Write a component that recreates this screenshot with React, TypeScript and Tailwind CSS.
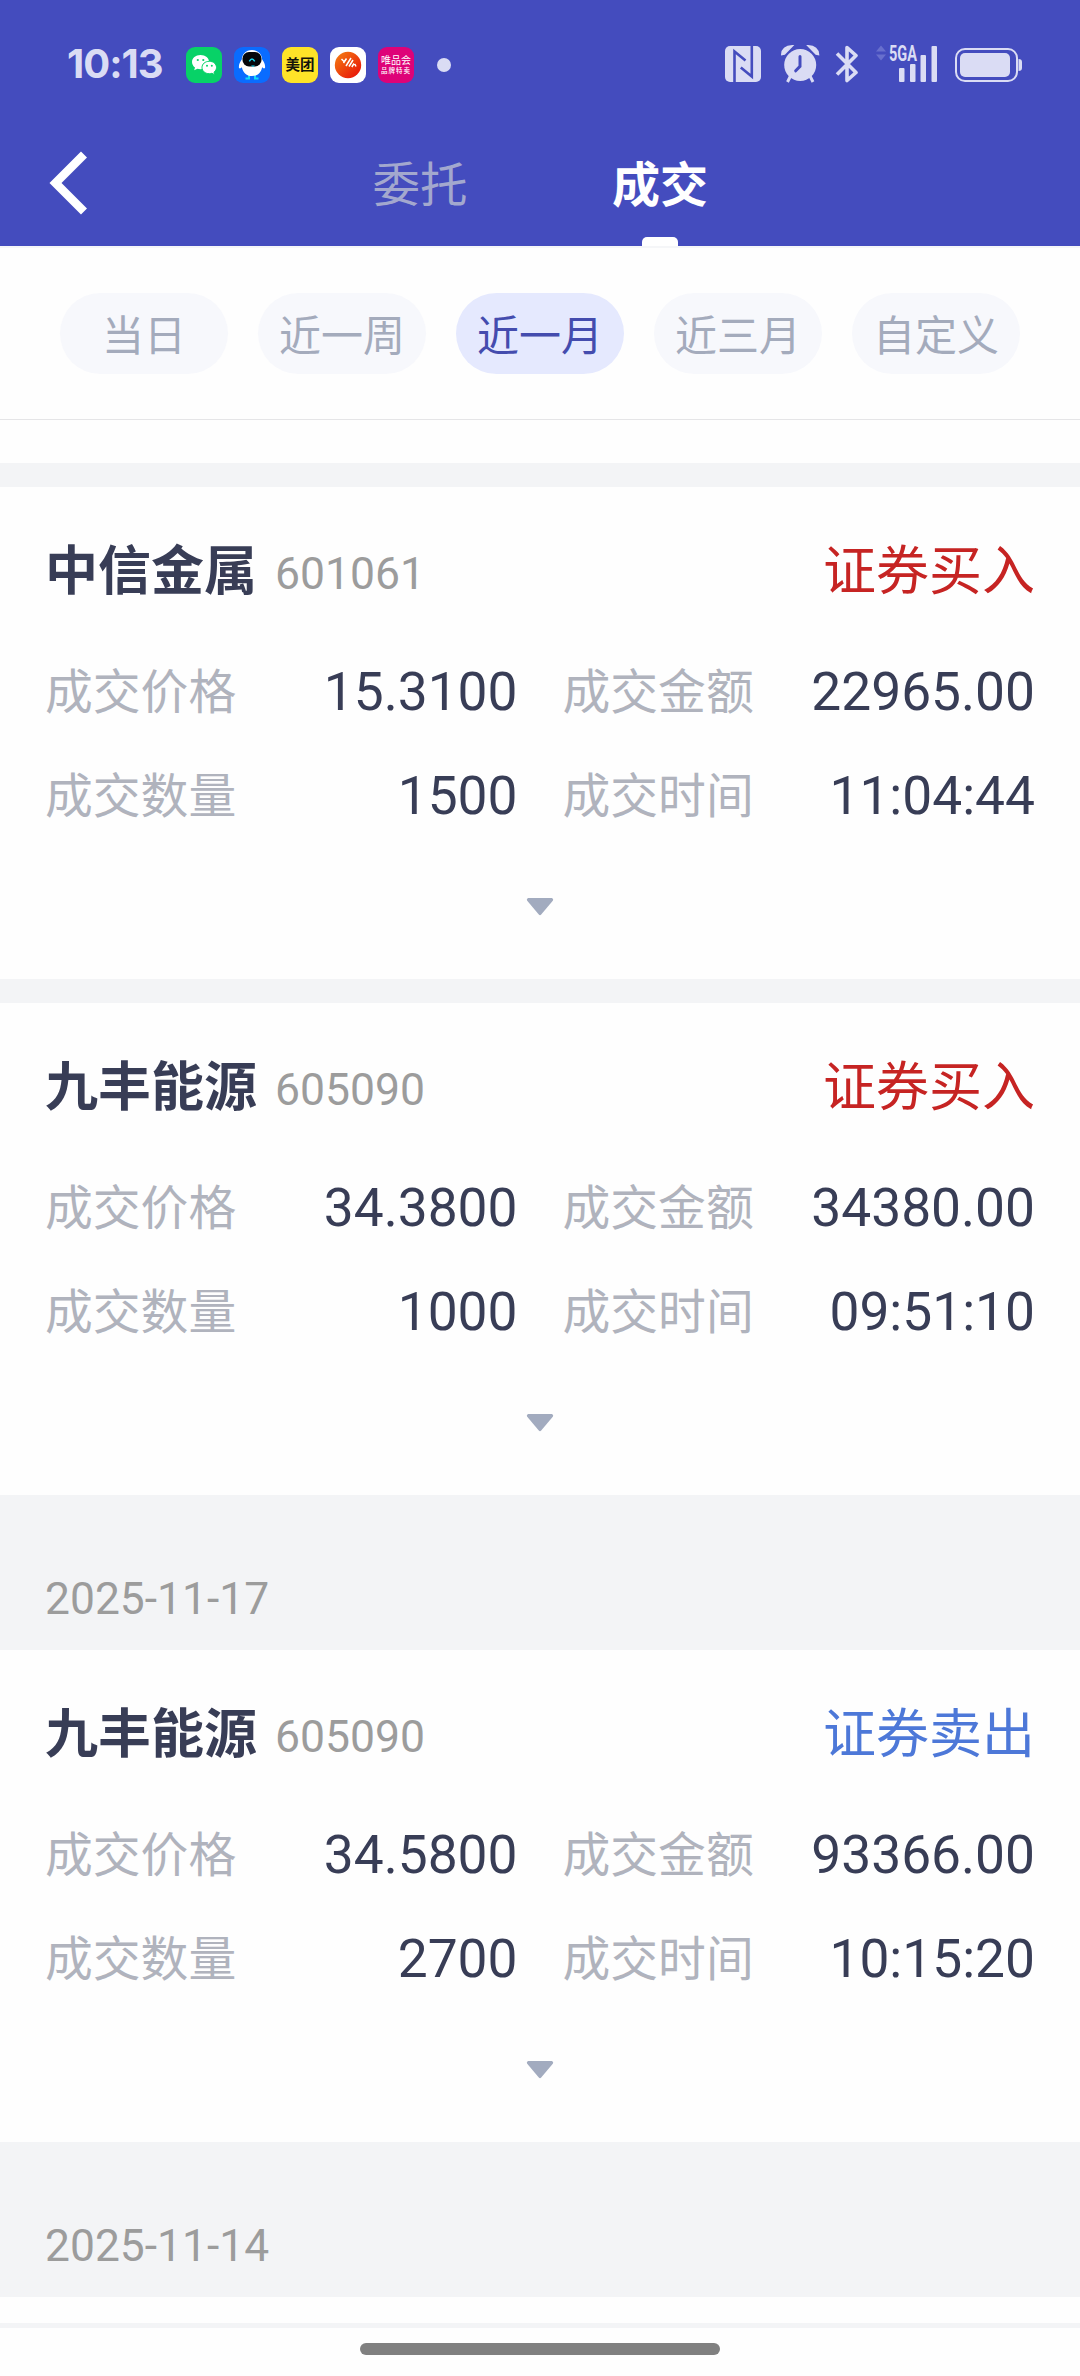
import type { ReactNode } from 'react';

type Trade = {
    name: string;
    code: string;
    side: 'buy' | 'sell';
    price: string;
    amount: string;
    quantity: string;
    time: string;
};

const ranges = ['当日', '近一周', '近一月', '近三月', '自定义'];

const recentTrades: Trade[] = [
    { name: '中信金属', code: '601061', side: 'buy', price: '15.3100', amount: '22965.00', quantity: '1500', time: '11:04:44' },
    { name: '九丰能源', code: '605090', side: 'buy', price: '34.3800', amount: '34380.00', quantity: '1000', time: '09:51:10' },
];

const olderTrades: Trade[] = [
    { name: '九丰能源', code: '605090', side: 'sell', price: '34.5800', amount: '93366.00', quantity: '2700', time: '10:15:20' },
];

export default function App() {
    return (
        <div className="flex h-[2376px] w-[1080px] flex-col overflow-hidden bg-[#fefefe] font-[Roboto,'Noto_Sans_CJK_SC',sans-serif]">
            <header className="h-[246px] shrink-0 bg-[#444cbe]">
                <StatusBar />
                <NavBar />
            </header>
            <RangeFilter active="近一月" />
            <main className="flex-1">
                {recentTrades.map((trade) => (
                    <div key={trade.time}>
                        <div className="h-6 bg-[#f3f4f6]" />
                        <TradeCard trade={trade} />
                    </div>
                ))}
                <DateHeading date="2025-11-17" />
                {olderTrades.map((trade) => (
                    <TradeCard key={trade.time} trade={trade} />
                ))}
                <DateHeading date="2025-11-14" />
            </main>
            <footer className="flex h-[53px] shrink-0 justify-center border-t-[5px] border-[#f3f4f6] pt-[15px]">
                <div className="h-3 w-[360px] rounded-full bg-[#808080]" />
            </footer>
        </div>
    );
}

function NavBar() {
    return (
        <nav className="flex h-[126px]">
            <button type="button" className="w-[300px] pl-[49px]">
                <svg width="38" height="64" viewBox="0 0 38 64" fill="none" stroke="#fff" strokeWidth="8.5">
                    <path d="M35 3.5 6.5 32 35 60.5" />
                </svg>
            </button>
            <button type="button" className="flex h-full w-[240px] justify-center text-[47.5px] leading-[133px] text-[#a3a8ce]">
                委托
            </button>
            <button type="button" className="flex h-full w-[240px] flex-col items-center text-[48px] font-bold leading-[132px] text-white">
                <span className="h-[117px]">成交</span>
                <span className="h-[9px] w-9 rounded-t-[5px] bg-white" />
            </button>
        </nav>
    );
}

function RangeFilter({ active }: { active: string }) {
    return (
        <div className="h-[217px] shrink-0">
            <div className="flex h-[174px] gap-[30px] border-b border-t-2 border-b-[#e5e5e7] border-t-[#f5f6f8] px-[60px] pt-[45px]">
                {ranges.map((range) => (
                    <button
                        key={range}
                        type="button"
                        className={
                            range === active
                                ? 'h-[81px] w-[168px] rounded-full bg-[#e5e9fe] text-[42px] leading-[88px] text-[#444cae]'
                                : 'h-[81px] w-[168px] rounded-full bg-[#f7f8fc] text-[42px] leading-[88px] text-[#a4abbc]'
                        }
                    >
                        {range}
                    </button>
                ))}
            </div>
        </div>
    );
}

function DateHeading({ date }: { date: string }) {
    return (
        <div className="h-[155px] bg-[#f3f4f6] px-[45px] pt-[74px] text-[44.4px] leading-[60px] text-[#9c9c9c]">
            {date}
        </div>
    );
}

function TradeCard({ trade }: { trade: Trade }) {
    return (
        <section className="h-[492px] px-[45px] pt-[54px]">
            <div className="flex h-[60px] justify-between leading-[62px]">
                <h2 className="text-[53px] font-bold text-[#383d56]">
                    {trade.name}
                    <span className="ml-[18px] align-[1px] text-[44.5px] font-normal text-[#9c9c9c]">{trade.code}</span>
                </h2>
                {trade.side === 'buy' ? (
                    <span className="text-[53px] text-[#c62423]">证券买入</span>
                ) : (
                    <span className="text-[53px] text-[#4d78d8]">证券卖出</span>
                )}
            </div>
            <dl className="mt-[39px] grid grid-cols-2 gap-x-[45px]">
                <Field label="成交价格" value={trade.price} />
                <Field label="成交金额" value={trade.amount} />
                <Field label="成交数量" value={trade.quantity} />
                <Field label="成交时间" value={trade.time} />
            </dl>
            <svg className="mx-auto mt-[50px]" width="28" height="18" viewBox="0 0 28 18" fill="#a2abbf">
                <path d="M2 0h24q2 1 .8 2.8L15.2 16.6q-1.2 1.2-2.4 0L1.2 2.8Q0 1 2 0z" />
            </svg>
        </section>
    );
}

function Field({ label, value }: { label: string; value: string }) {
    return (
        <div className="flex h-[104px] justify-between leading-[104px]">
            <dt className="text-[47.8px] leading-[106px] text-[#b0b3bd]">{label}</dt>
            <dd className="text-[53.3px] text-[#383d56]">{value}</dd>
        </div>
    );
}

function StatusBar() {
    return (
        <div className="flex h-[120px] items-start text-[#dadcf4]">
            <div className="ml-[67px] mt-[40px] w-[119px] font-[Inter] text-[40px] font-bold leading-[48px] tracking-[-1px]">
                10:13
            </div>
            <div className="mt-[47px] flex gap-3">
                <AppIcon className="bg-[#07d267]">
                    <svg width="36" height="36" viewBox="0 0 36 36" fill="#fff">
                        <path d="M14.5 8C9.6 8 6 11 6 15c0 2.2 1.2 4.2 3 5.5l-.8 2.8 3.2-1.5c1 .3 2 .4 3.1.4 5 0 8.6-3.2 8.600-7.200S19.500 8 14.500 8z" />
                        <path
                            d="M23.3 14.3c-4.200 0-7.300 2.700-7.300 6.200s3.100 6.200 7.300 6.200c.9 0 1.800-.1 2.600-.4l2.700 1.400-.6-2.500c1.600-1.200 2.500-2.800 2.500-4.700 0-3.500-3-6.200-7.200-6.200z"
                            stroke="#07d267"
                        />
                        <g fill="#07d267">
                            <circle cx="11.8" cy="13" r="1.1" />
                            <circle cx="17.3" cy="13" r="1.1" />
                            <circle cx="21" cy="18.8" r="1" />
                            <circle cx="25.8" cy="18.8" r="1" />
                        </g>
                    </svg>
                </AppIcon>
                <AppIcon className="bg-[#0a6cff]">
                    <svg width="36" height="36" viewBox="0 0 36 36">
                        <path d="M15 28v3.5h-3.5M21 28v3.5h3.5" stroke="#16d9f5" strokeWidth="2" fill="none" />
                        <path d="M18 3C11.5 3 8 7.5 7.8 12.5 5.8 15 4.5 18 5 21c1 .8 2 .3 2.8-.8C9.2 26 12.5 29 18 29s8.800-3 10.200-8.800c.8 1.100 1.800 1.600 2.800.8.500-3-.8-6-2.800-8.500C28 7.500 24.500 3 18 3z" fill="#fff" />
                        <rect x="8.5" y="5" width="19" height="14.5" rx="6.5" fill="#06080c" />
                        <path d="M15.3 14.3q2.7-4.6 5.4 0" stroke="#16d9f5" strokeWidth="1.5" fill="none" />
                        <path d="M17 18.5h4l-2 1.5z" fill="#16d9f5" />
                    </svg>
                </AppIcon>
                <AppIcon className="bg-[#ffe328]">
                    <span className="text-[14.5px] font-bold leading-[37px] text-[#15130b]">美团</span>
                </AppIcon>
                <AppIcon className="bg-white">
                    <svg width="36" height="36" viewBox="0 0 36 36">
                        <defs>
                            <linearGradient id="ember" x1="0" y1="0" x2="1" y2="1">
                                <stop offset="0" stopColor="#f58112" />
                                <stop offset="1" stopColor="#e60a08" />
                            </linearGradient>
                        </defs>
                        <circle cx="18" cy="18" r="13.2" fill="url(#ember)" />
                        <path d="M11.5 12l3 3M13.500 16l3-4.500M16 19l5-8M19 19.500l4-6.500M21.800 20l2.200-3.500M24.800 17l1.200 2.500" stroke="#fff" strokeWidth="1.5" fill="none" />
                    </svg>
                </AppIcon>
                <AppIcon className="flex-col bg-[#de0278] text-white">
                    <span className="mt-[8px] whitespace-nowrap text-[10px] leading-[12px]">唯品会</span>
                    <span className="whitespace-nowrap text-[6.5px] font-medium leading-[8px] tracking-[1px]">品牌特卖</span>
                </AppIcon>
            </div>
            <div className="ml-[23px] mt-[58px] size-3.5 rounded-full bg-current" />
            <div className="ml-auto mr-[57px] mt-[45px] flex h-[38px]">
                <svg className="mt-px" width="36" height="36" viewBox="0 0 36 36">
                    <rect width="36" height="36" rx="5" fill="currentColor" />
                    <path d="M9.5 36V5.5L20.5 14.5M26.8 0V30.5L15.8 21.5" stroke="#444cbe" strokeWidth="2.6" fill="none" />
                </svg>
                <svg className="ml-[20px]" width="39" height="38" viewBox="0 0 39 38" fill="none">
                    <path d="M9.5 31l-3 6M29 31l3 6" stroke="currentColor" strokeWidth="3" />
                    <circle cx="19.2" cy="20" r="16" fill="currentColor" />
                    <path d="M.8 9.5Q1 1.5 11.5 .8L3.5 9zM37.5 9.5Q37 1.5 27 .8L35 9z" fill="currentColor" stroke="currentColor" strokeWidth="1.5" />
                    <path d="M19 11.5v9.8l-4.3 4.5" stroke="#444cbe" strokeWidth="3" strokeLinecap="round" />
                </svg>
                <svg className="ml-[15px]" width="25" height="38" viewBox="0 0 25 38" fill="none" stroke="currentColor" strokeWidth="3.6" strokeLinejoin="round">
                    <path d="M2 8.5L21 27.5 12 35.5V2.5L21 10.5 2 29.5" />
                </svg>
                <svg className="ml-[15px]" width="12" height="16" viewBox="0 0 12 16" fill="#686fcd">
                    <path d="M1 6.5 6 .5l5 6zM1 9.5h10l-5 6z" />
                </svg>
                <div className="relative ml-0.5 h-[38px] w-[50px]">
                    <svg width="50" height="38" viewBox="0 0 50 38" fill="currentColor">
                        <rect x="10" y="23" width="5.5" height="14" rx="1" />
                        <rect x="21" y="19" width="5.5" height="18" rx="1" />
                        <rect x="31.5" y="10" width="5.5" height="27" rx="1" />
                        <rect x="42.5" y="1" width="5.5" height="36" rx="1" />
                    </svg>
                    <span className="absolute -top-px left-0 origin-left scale-x-[0.66] text-[22px] font-bold leading-[20px]">5GA</span>
                </div>
                <svg className="ml-[16px] mt-[3px]" width="68" height="34" viewBox="0 0 68 34">
                    <rect x="1" y="1" width="61" height="32" rx="9" fill="none" stroke="currentColor" strokeWidth="2" />
                    <rect x="5" y="5" width="50" height="24" rx="5" fill="currentColor" />
                    <path d="M63.5 11q3.5 0 3.5 3v6q0 3-3.5 3z" fill="currentColor" />
                </svg>
            </div>
        </div>
    );
}

function AppIcon({ className, children }: { className: string; children: ReactNode }) {
    return (
        <div className={`${className} flex h-9 w-9 items-center overflow-hidden rounded-[9px] [&>span]:mx-auto`}>
            {children}
        </div>
    );
}
